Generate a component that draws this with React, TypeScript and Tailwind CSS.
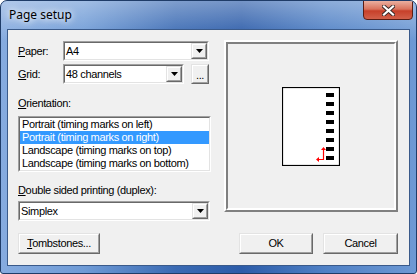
import React from "react";

function Sunken({ className = "", children }: { className?: string; children?: React.ReactNode }) {
  return (
    <div className={`border border-t-[#a0a0a0] border-l-[#a0a0a0] border-r-white border-b-white ${className}`}>
      <div className="w-full h-full border border-t-[#696969] border-l-[#696969] border-r-[#e3e3e3] border-b-[#e3e3e3] bg-white">
        {children}
      </div>
    </div>
  );
}

function Raised({ className = "", children }: { className?: string; children?: React.ReactNode }) {
  return (
    <div className={`border border-t-[#e3e3e3] border-l-[#e3e3e3] border-r-[#696969] border-b-[#696969] ${className}`}>
      <div className="w-full h-full border border-t-white border-l-white border-r-[#a0a0a0] border-b-[#a0a0a0] bg-[#f0f0f0] flex items-center justify-center">
        {children}
      </div>
    </div>
  );
}

function Combo({ value, className = "" }: { value: string; className?: string }) {
  return (
    <Sunken className={`h-[20px] ${className}`}>
      <div className="flex h-full items-center">
        <span className="flex-1 pl-[1px] whitespace-nowrap">{value}</span>
        <Raised className="w-[16px] h-[16px]">
          <svg width="7" height="4" viewBox="0 0 7 4">
            <polygon points="0,0 7,0 3.5,4" fill="#000" />
          </svg>
        </Raised>
      </div>
    </Sunken>
  );
}

const orientations = [
  "Portrait (timing marks on left)",
  "Portrait (timing marks on right)",
  "Landscape (timing marks on top)",
  "Landscape (timing marks on bottom)",
];

function PagePreview() {
  const bars = [6, 15, 24, 33, 42, 51, 60, 69];
  return (
    <svg width="58" height="79" viewBox="0 0 58 79">
      <rect x="0.5" y="0.5" width="57" height="78" fill="#fff" stroke="#000" strokeWidth="1.2" />
      {bars.map(y => (
        <rect key={y} x="44" y={y} width="8" height="4" fill="#000" />
      ))}
      <polyline points="35,72.5 41.5,72.5 41.5,62" fill="none" stroke="#f00" strokeWidth="1.2" />
      <polygon points="41.5,60 39,63 44,63" fill="#f00" />
      <polygon points="34,72.5 37,70 37,75" fill="#f00" />
    </svg>
  );
}

export default function App() {
  return (
    <div className="w-[417px] h-[274px] font-['Liberation_Sans',Arial,sans-serif] text-[11px] leading-[13px] tracking-[-0.35px] text-black">
      <div className="relative w-full h-full rounded-t-[7px] rounded-b-[3px] border border-[#1f3c68] bg-[linear-gradient(90deg,#86abdf_0%,#6f9bd6_20%,#3a6ab3_42%,#2c5ca9_58%,#4f80c5_78%,#6d99d4_100%)] flex flex-col overflow-hidden">
        <div className="absolute inset-x-0 top-0 h-[40px] bg-[linear-gradient(180deg,rgba(255,255,255,0.35),rgba(255,255,255,0))]" />

        {/* title bar */}
        <div className="relative h-[28px] pl-[8px] pt-[6px]">
          <span className="font-['Noto_Sans',sans-serif] text-[12px] leading-[16px] tracking-normal [text-shadow:0_0_6px_#fff,0_0_10px_#fff]">Page setup</span>
        </div>
        <div className="absolute top-[-1px] right-[3px] w-[50px] h-[20px] rounded-b-[4px] border border-[#5a1d14] bg-[linear-gradient(180deg,#eab0a0_0%,#d9735d_45%,#c7402a_55%,#d2604a_100%)] flex items-center justify-center">
          <svg width="13" height="11" viewBox="0 0 13 11">
            <path d="M2 1.5 L11 9.5 M11 1.5 L2 9.5" stroke="#3a2a28" strokeWidth="4" strokeLinecap="square" />
            <path d="M2 1.5 L11 9.5 M11 1.5 L2 9.5" stroke="#fff" strokeWidth="2.2" strokeLinecap="square" />
          </svg>
        </div>

        {/* client area */}
        <div className="relative mx-[6px] mb-[7px] flex-1 border border-[#3a5a8a] bg-[#f0f0f0] pl-[10px] pr-[11px] pt-[10px] flex flex-col">
          <div className="flex">
            <div className="w-[193px] mt-[1px] flex flex-col">
              <div className="flex items-center h-[20px]">
                <span className="w-[45px]"><span className="underline">P</span>aper:</span>
                <Combo value="A4" className="w-[146px]" />
              </div>
              <div className="flex items-center h-[20px] mt-[3px]">
                <span className="w-[45px]"><span className="underline">G</span>rid:</span>
                <Combo value="48 channels" className="w-[121px]" />
                <Raised className="ml-[7px] w-[18px] h-[20px]">
                  <span className="leading-[11px] pt-[2px]">...</span>
                </Raised>
              </div>
              <div className="mt-[13px] h-[13px]"><span className="underline">O</span>rientation:</div>
              <Sunken className="mt-[6px] w-[193px] h-[56px]">
                <div className="flex flex-col">
                  {orientations.map((o, i) => (
                    <div key={o} className={`h-[13px] pl-[2px] whitespace-nowrap ${i === 1 ? "bg-[#3399ff] text-white" : ""}`}>{o}</div>
                  ))}
                </div>
              </Sunken>
              <div className="mt-[12px] h-[13px] whitespace-nowrap"><span className="underline">D</span>ouble sided printing (duplex):</div>
              <Combo value="Simplex" className="mt-[4px] w-[192px]" />
            </div>

            <div className="ml-[13px] w-[174px] h-[172px] border-2 border-t-white border-l-white border-r-[#808080] border-b-[#808080]">
              <div className="w-full h-full border-2 border-t-[#808080] border-l-[#808080] border-r-white border-b-white flex items-center justify-center">
                <PagePreview />
              </div>
            </div>
          </div>

          <div className="flex mt-[12px]">
            <Raised className="w-[82px] h-[21px]">
              <span><span className="underline">T</span>ombstones...</span>
            </Raised>
            <div className="flex-1" />
            <Raised className="w-[74px] h-[21px]">OK</Raised>
            <Raised className="ml-[10px] w-[75px] h-[21px]">Cancel</Raised>
          </div>
        </div>
      </div>
    </div>
  );
}
